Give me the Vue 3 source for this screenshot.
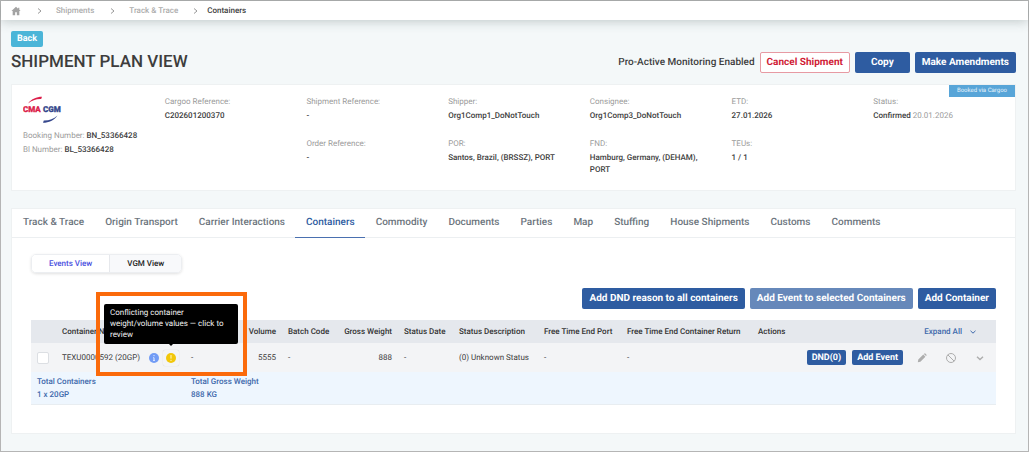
<script setup>
import { ref } from 'vue'

const crumbs = ['Shipments', 'Track & Trace']

const details = [
  [{ label: 'Cargoo Reference:', value: 'C202601200370' }],
  [
    { label: 'Shipment Reference:', value: '-' },
    { label: 'Order Reference:', value: '-' },
  ],
  [
    { label: 'Shipper:', value: 'Org1Comp1_DoNotTouch' },
    { label: 'POR:', value: 'Santos, Brazil, (BRSSZ), PORT' },
  ],
  [
    { label: 'Consignee:', value: 'Org1Comp3_DoNotTouch' },
    { label: 'FND:', value: 'Hamburg, Germany, (DEHAM), PORT' },
  ],
  [
    { label: 'ETD:', value: '27.01.2026' },
    { label: 'TEUs:', value: '1 / 1' },
  ],
  [{ label: 'Status:', value: 'Confirmed', note: '20.01.2026' }],
]

const tabs = [
  'Track & Trace',
  'Origin Transport',
  'Carrier Interactions',
  'Containers',
  'Commodity',
  'Documents',
  'Parties',
  'Map',
  'Stuffing',
  'House Shipments',
  'Customs',
  'Comments',
]
const activeTab = ref('Containers')

const views = ['Events View', 'VGM View']
const activeView = ref('Events View')

const selected = ref(false)
</script>

<template>
  <div class="page">
    <nav class="topbar" aria-label="Breadcrumb">
      <a href="#" class="home" aria-label="Home">
        <svg viewBox="0 0 24 24" width="10" height="10">
          <path d="M12 2 1 12h3v10h6v-7h4v7h6V12h3l-3-2.800V4h-3v2.500z" fill="#a3a3a3" />
        </svg>
      </a>
      <template v-for="crumb in crumbs" :key="crumb">
        <svg class="sep" viewBox="0 0 6 8" width="6" height="8"><path d="M1 1.500 4 4 1 6.500" /></svg>
        <a href="#" class="crumb">{{ crumb }}</a>
      </template>
      <svg class="sep last" viewBox="0 0 6 8" width="6" height="8"><path d="M1 1.500 4 4 1 6.500" /></svg>
      <span class="current">Containers</span>
    </nav>

    <main class="content">
      <button type="button" class="back">Back</button>

      <header class="heading">
        <h1>SHIPMENT PLAN VIEW</h1>
        <div class="heading-actions">
          <span class="monitoring">Pro-Active Monitoring Enabled</span>
          <button type="button" class="btn btn-outline">Cancel Shipment</button>
          <button type="button" class="btn btn-copy">Copy</button>
          <button type="button" class="btn">Make Amendments</button>
        </div>
      </header>

      <section class="card summary">
        <span class="ribbon">Booked via Cargoo</span>
        <div class="carrier">
          <svg class="logo" viewBox="0 0 40 28" width="40" height="28" role="img" aria-label="CMA CGM">
            <path d="M5 7.500C8.500 3 13.500 .8 19 .8l-.8 2.200C13 2.800 9 4.400 5 7.500z" fill="#dc1f4b" />
            <text x="0" y="16" class="logo-text" fill="#dc1f4b" stroke="#dc1f4b">CMA</text>
            <text x="20" y="16" class="logo-text" fill="#35478c" stroke="#35478c">CGM</text>
            <path d="M34.500 19.500C31 24.500 26 26.800 20 26.800l.8-2.200C26.500 24.700 30.500 23 34.500 19.500z" fill="#35478c" />
          </svg>
          <p><span>Booking Number:</span> <b>BN_53366428</b></p>
          <p><span>Bl Number:</span> <b>BL_53366428</b></p>
        </div>
        <dl v-for="(group, i) in details" :key="i" class="group">
          <div v-for="item in group" :key="item.label" class="item">
            <dt>{{ item.label }}</dt>
            <dd>{{ item.value }} <span v-if="item.note" class="note">{{ item.note }}</span></dd>
          </div>
        </dl>
      </section>

      <section class="card">
        <div class="tabs" role="tablist">
          <button
            v-for="tab in tabs"
            :key="tab"
            type="button"
            role="tab"
            class="tab"
            :class="{ active: tab === activeTab }"
            :aria-selected="tab === activeTab"
            @click="activeTab = tab"
          >
            {{ tab }}
          </button>
        </div>

        <div class="panel">
          <div class="segment">
            <button
              v-for="view in views"
              :key="view"
              type="button"
              :class="{ active: view === activeView }"
              @click="activeView = view"
            >
              {{ view }}
            </button>
          </div>

          <div class="toolbar">
            <button type="button" class="btn">Add DND reason to all containers</button>
            <button type="button" class="btn" :disabled="!selected">Add Event to selected Containers</button>
            <button type="button" class="btn">Add Container</button>
          </div>

          <table class="containers">
            <colgroup>
              <col class="c-check" />
              <col class="c-number" />
              <col class="c-seal" />
              <col class="c-volume" />
              <col class="c-batch" />
              <col class="c-gross" />
              <col class="c-date" />
              <col class="c-desc" />
              <col class="c-port" />
              <col class="c-return" />
              <col />
            </colgroup>
            <thead>
              <tr>
                <th></th>
                <th>Container Number</th>
                <th></th>
                <th class="num">Volume</th>
                <th>Batch Code</th>
                <th class="num">Gross Weight</th>
                <th>Status Date</th>
                <th>Status Description</th>
                <th>Free Time End Port</th>
                <th>Free Time End Container Return</th>
                <th>
                  <div class="actions-head">
                    <span>Actions</span>
                    <button type="button" class="expand">
                      Expand All
                      <svg viewBox="0 0 8 8" width="8" height="8"><path d="M1.500 2.800 4 5.200 6.500 2.800" /></svg>
                    </button>
                  </div>
                </th>
              </tr>
            </thead>
            <tbody>
              <tr>
                <td><input v-model="selected" type="checkbox" class="check" aria-label="Select TEXU0000592" /></td>
                <td>
                  <div class="number">
                    <span>TEXU0000592 (20GP)</span>
                    <div class="flags">
                      <svg viewBox="0 0 10 10" width="10" height="10">
                        <circle cx="5" cy="5" r="5" fill="#729cf5" />
                        <path d="M5 2v1.200M4.200 4.700H5v2.500M4 7.400h2" stroke="#dfe9ff" fill="none" />
                      </svg>
                      <button type="button" class="warning" aria-describedby="conflict-tip" aria-label="Review conflict">
                        <svg viewBox="0 0 10 10" width="10" height="10">
                          <circle cx="5" cy="5" r="5" fill="#f2c70a" />
                          <path d="M5 2v3.600M5 6.800V8" stroke="#fff6c8" fill="none" />
                        </svg>
                      </button>
                    </div>
                    <div id="conflict-tip" class="tooltip" role="tooltip">
                      Conflicting container weight/volume values — click to review
                    </div>
                    <div class="highlight"></div>
                  </div>
                </td>
                <td>-</td>
                <td class="num">5555</td>
                <td>-</td>
                <td class="num">888</td>
                <td>-</td>
                <td>(0) Unknown Status</td>
                <td>-</td>
                <td>-</td>
                <td>
                  <div class="row-actions">
                    <button type="button" class="btn-small">DND(0)</button>
                    <button type="button" class="btn-small">Add Event</button>
                    <button type="button" class="icon" aria-label="Edit">
                      <svg viewBox="0 0 10 10" width="10" height="10">
                        <path d="M.8 9.200l.5-2.600L6.300 1.600 8.400 3.700 3.400 8.700zM6.900 1 7.500.5q.4-.3.8 0l1.200 1.200q.3.4 0 .8l-.5.600z" fill="#adadad" />
                      </svg>
                    </button>
                    <button type="button" class="icon" aria-label="Cancel">
                      <svg viewBox="0 0 12 12" width="12" height="12">
                        <circle cx="6" cy="6" r="4.500" /><path d="M2.800 2.800 9.200 9.200" />
                      </svg>
                    </button>
                    <button type="button" class="icon" aria-label="Expand">
                      <svg viewBox="0 0 10 10" width="10" height="10"><path d="M2 3.700 5 6.500 8 3.700" stroke-width="1.400" /></svg>
                    </button>
                  </div>
                </td>
              </tr>
            </tbody>
            <tfoot>
              <tr>
                <td colspan="2">Total Containers<br />1 x 20GP</td>
                <td colspan="9">Total Gross Weight<br />888 KG</td>
              </tr>
            </tfoot>
          </table>
        </div>
      </section>
    </main>
  </div>
</template>

<style>
body {
  margin: 0;
}
</style>

<style scoped>
.page {
  box-sizing: border-box;
  min-height: 100vh;
  border: 1px solid #b5b5b5;
  background: #f4f8f9;
  color: #3d3d3d;
  font-family: Roboto, 'Liberation Sans', sans-serif;
  font-size: 8px;
  line-height: 12px;
  text-rendering: geometricPrecision;
}

button {
  padding: 0;
  border: 0;
  background: none;
  color: inherit;
  font: inherit;
  text-rendering: inherit;
  cursor: pointer;
}

svg {
  display: block;
  flex: none;
}

/* breadcrumb */
.topbar {
  display: flex;
  align-items: center;
  height: 19px;
  padding-left: 10px;
  background: #fff;
  box-shadow: 0 1px 12px rgba(60, 80, 80, 0.3);
  font-weight: 500;
}

.sep {
  margin: 0 13px 0 16px;
  fill: none;
  stroke: #999;
}

.sep.last {
  margin: 0 8px 0 15px;
}

.crumb {
  color: #adadad;
  text-decoration: none;
}

/* heading */
.content {
  padding: 11px 12px 15px 10px;
}

.back {
  padding: 0 6px;
  border-radius: 2px;
  background: #4bb5d8;
  color: #fff;
  font-size: 9px;
  font-weight: 700;
  line-height: 16px;
}

.heading {
  display: flex;
  align-items: center;
  justify-content: space-between;
  margin: 4px 0 11px;
}

h1 {
  margin: 0;
  padding-top: 1px;
  font-size: 17px;
  font-weight: 500;
  line-height: 21px;
}

.heading-actions {
  display: flex;
  align-items: center;
  gap: 5px;
}

.monitoring {
  padding-top: 1px;
  font-size: 10px;
  font-weight: 500;
}

.btn {
  height: 21px;
  padding: 1px 7px 0;
  border-radius: 2px;
  background: #2e5ca1;
  color: #fff;
  font-size: 10px;
  font-weight: 700;
}

.btn:disabled {
  background: #6688ba;
  cursor: default;
}

.btn-outline {
  padding: 1px 6px 0;
  border: 1px solid #e79aa3;
  background: #fff;
  color: #d01c35;
}

.btn-copy {
  padding: 1px 16px 0;
}

/* shipment summary */
.card {
  border: 1px solid #eef1f2;
  background: #fff;
}

.summary {
  position: relative;
  display: grid;
  grid-template-columns: repeat(7, 1fr);
  min-height: 94px;
  margin-bottom: 17px;
  padding: 11px 0 0 11px;
}

.ribbon {
  position: absolute;
  top: 0;
  right: 0;
  padding: 0 8px;
  background: #58a5d8;
  color: #e8f4fc;
  font-size: 6px;
}

.logo {
  margin-bottom: 6px;
}

.logo-text {
  font-family: Roboto, sans-serif;
  font-size: 8px;
  font-weight: 900;
  stroke-width: 0.3;
}

.carrier p {
  margin: 0 0 2px;
}

.carrier span,
dt {
  color: #9b9b9b;
}

b,
dd {
  font-weight: 500;
}

.group {
  margin: 0;
}

.item {
  min-height: 42px;
}

dd {
  margin: 2px 24px 0 0;
}

.note {
  color: #9b9b9b;
  font-weight: 400;
}

/* tabs */
.tabs {
  display: flex;
  border-bottom: 1px solid #eceff1;
}

.tab {
  height: 29px;
  margin-bottom: -1px;
  padding: 0 10px 0 11px;
  border-bottom: 1px solid transparent;
  color: #6c757d;
  font-size: 10px;
  font-weight: 500;
}

.tab.active {
  border-color: #4a70b0;
  color: #2e5ca1;
}

.panel {
  padding: 16px 19px 28px;
}

.segment {
  display: inline-flex;
  overflow: hidden;
  border: 1px solid #eceef1;
  border-radius: 5px;
  box-shadow: 0 1px 3px rgba(0, 0, 0, 0.12);
}

.segment button {
  height: 17px;
  padding: 0 17px;
  background: #f8f9fb;
  color: #222;
  font-weight: 500;
}

.segment button + button {
  border-left: 1px solid #e6e8ec;
}

.segment .active {
  background: #fff;
  color: #4a4fe0;
}

.toolbar {
  display: flex;
  justify-content: flex-end;
  gap: 5px;
  margin: 15px 0 11px;
}

/* containers table */
.containers {
  width: 100%;
  border-collapse: collapse;
  table-layout: fixed;
}

.c-check { width: 25px; }
.c-number { width: 129px; }
.c-seal { width: 50px; }
.c-volume { width: 47px; }
.c-batch { width: 54px; }
.c-gross { width: 62px; }
.c-date { width: 55px; }
.c-desc { width: 85px; }
.c-port { width: 83px; }
.c-return { width: 131px; }

th,
td {
  padding: 0 6px;
  text-align: left;
  white-space: nowrap;
}

th {
  height: 23px;
  background: #e5e8ed;
  color: #333;
  font-weight: 500;
}

tbody td {
  height: 29px;
  background: #f3f4f6;
}

.num {
  text-align: right;
}

.actions-head {
  display: flex;
  justify-content: space-between;
}

.expand {
  display: flex;
  align-items: center;
  gap: 7px;
  margin-right: 13px;
  color: #3d68ab;
  font-weight: 500;
}

.expand svg {
  fill: none;
  stroke: #3d68ab;
}

.check {
  display: block;
  box-sizing: border-box;
  width: 12px;
  height: 12px;
  margin: 0;
  border: 1px solid #dcdfe3;
  border-radius: 2px;
  background: #fff;
  appearance: none;
}

.check:checked {
  background: #2e5ca1;
}

.number {
  position: relative;
  display: flex;
  align-items: center;
  justify-content: space-between;
}

.flags {
  display: flex;
  align-items: center;
  gap: 4px;
}

.warning {
  padding: 3px;
  border-radius: 2px;
  box-shadow: 0 0 1px rgba(0, 0, 0, 0.2);
}

.tooltip {
  position: absolute;
  bottom: 22px;
  left: 42px;
  z-index: 1;
  box-sizing: border-box;
  width: 134px;
  padding: 3px 6px 4px;
  border-radius: 2px;
  background: #000;
  color: #f2f2f2;
  line-height: 11px;
  white-space: normal;
}

.tooltip::after {
  content: '';
  position: absolute;
  top: 100%;
  left: 65px;
  border: 2px solid transparent;
  border-top-color: #000;
}

.highlight {
  position: absolute;
  bottom: -10px;
  left: 34px;
  z-index: 2;
  box-sizing: border-box;
  width: 151px;
  height: 84px;
  border: 4px solid #fb6a0a;
  pointer-events: none;
}

.row-actions {
  display: flex;
  align-items: center;
  justify-content: flex-end;
  margin-right: 5px;
}

.btn-small {
  height: 15px;
  margin-right: 6px;
  padding: 0 5px;
  border-radius: 2px;
  background: #2e5ca1;
  color: #fff;
  font-size: 9px;
  font-weight: 700;
}

.icon {
  margin-left: 18px;
}

.btn-small + .icon {
  margin-left: 8px;
}

.icon svg {
  fill: none;
  stroke: #adadad;
}

.icon svg path[fill] {
  stroke: none;
}

tfoot td {
  padding: 3px 6px;
  border-bottom: 1px solid #e8edf1;
  background: #eef6fe;
  color: #3d68ab;
  font-weight: 500;
  line-height: 13px;
}
</style>
